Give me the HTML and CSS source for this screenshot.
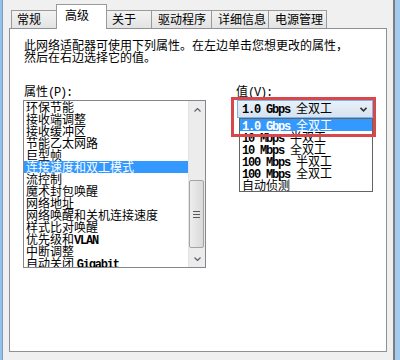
FILE: index.html
```html
<!DOCTYPE html>
<html lang="zh-CN">
<head>
<meta charset="utf-8">
<link rel="stylesheet" href="styles.css">
</head>
<body>
<div class="win">
  <div class="edge-l"></div>
  <div class="main">
    <div class="tabs">
      <div class="tab t1">常规</div>
      <div class="tab sel t2">高级</div>
      <div class="tab t3">关于</div>
      <div class="tab t4">驱动程序</div>
      <div class="tab t5">详细信息</div>
      <div class="tab t6">电源管理</div>
    </div>
    <div class="panel">
      <p class="desc">此网络适配器可使用下列属性。在左边单击您想更改的属性，<br>然后在右边选择它的值。</p>
      <div class="cols">
        <div class="col-left">
          <div class="label">属性<span class="m">(P):</span></div>
          <div class="listbox">
            <ul class="items">
              <li>环保节能</li>
              <li>接收端调整</li>
              <li>接收缓冲区</li>
              <li>节能乙太网路</li>
              <li>巨型帧</li>
              <li class="on">连接速度和双工模式</li>
              <li>流控制</li>
              <li>魔术封包唤醒</li>
              <li>网络地址</li>
              <li>网络唤醒和关机连接速度</li>
              <li>样式比对唤醒</li>
              <li>优先级和<span class="m b">VLAN</span></li>
              <li>中断调整</li>
              <li>自动关闭 <span class="m b">Gigabit</span></li>
            </ul>
            <div class="vscroll">
              <div class="sbtn"><svg width="7" height="4" viewBox="0 0 7 4"><polyline points="0.5,3.5 3.5,0.5 6.5,3.5" fill="none" stroke="#606060" stroke-width="1.2"/></svg></div>
              <div class="track-top"></div>
              <div class="thumb"><span></span><span></span><span></span></div>
              <div class="track-bot"></div>
              <div class="sbtn"><svg width="7" height="4" viewBox="0 0 7 4"><polyline points="0.5,0.5 3.5,3.5 6.5,0.5" fill="none" stroke="#606060" stroke-width="1.2"/></svg></div>
            </div>
          </div>
        </div>
        <div class="col-right">
          <div class="label">值<span class="m">(V):</span></div>
          <div class="combo-wrap">
            <div class="combo">
              <span class="val"><span class="m b">1.0 Gbps </span>全双工</span>
              <svg class="chev" width="7" height="5" viewBox="0 0 7 5"><polyline points="0.5,0.8 3.5,3.8 6.5,0.8" fill="none" stroke="#333" stroke-width="1.6"/></svg>
            </div>
            <ul class="dropdown">
              <li class="on"><span class="m b">1.0 Gbps </span>全双工</li>
              <li><span class="m b">10 Mbps </span>半双工</li>
              <li><span class="m b">10 Mbps </span>全双工</li>
              <li><span class="m b">100 Mbps </span>半双工</li>
              <li><span class="m b">100 Mbps </span>全双工</li>
              <li>自动侦测</li>
            </ul>
            <div class="highlight"></div>
          </div>
        </div>
      </div>
    </div>
  </div>
  <div class="edge-r"></div>
</div>
</body>
</html>
```

FILE: styles.css
```css
* { box-sizing: border-box; }
html, body { margin: 0; padding: 0; }
body {
  width: 400px;
  height: 360px;
  overflow: hidden;
  background: #f0f0f0;
  font-family: "Noto Sans CJK SC", sans-serif;
  font-size: 12px;
  color: #000;
}
.win { display: flex; height: 360px; }
.edge-l { width: 3px; background: #93c2ec; border-right: 1px solid #7d9cb8; }
.edge-r { width: 7px; border-left: 2px solid #7c7c7c; background: #a3cbf0; }
.main {
  flex: 1;
  display: flex;
  flex-direction: column;
  padding: 4px 6px 8px 6px;
}
.tabs {
  display: flex;
  align-items: flex-end;
  height: 24px;
  margin-left: 2px;
  position: relative;
  z-index: 2;
}
.tab {
  height: 18px;
  border: 1px solid #9a9a9a;
  border-bottom: none;
  background: linear-gradient(#f2f2f2, #e3e3e3);
  line-height: 16px;
  padding-left: 5px;
  margin-left: -1px;
  white-space: nowrap;
}
.tab.t1 { margin-left: 0; width: 46px; }
.tab.t2 { width: 51px; }
.tab.t3 { width: 46px; }
.tab.t4 { width: 61px; padding-left: 6px; }
.tab.t5 { width: 58px; padding-left: 6px; }
.tab.t6 { width: 59px; padding-left: 6px; }
.tab.sel {
  height: 25px;
  margin-bottom: -1px;
  background: #fff;
  padding-left: 8px;
  line-height: 19px;
  position: relative;
  z-index: 3;
}
.panel {
  flex: 1;
  background: #fff;
  border: 1px solid #8e9196;
  padding: 10px 0 0 13px;
}
.desc {
  margin: 0 0 0 1px;
  line-height: 12px;
  white-space: nowrap;
}
.cols { display: flex; gap: 29px; margin-top: 21px; }
.col-left { width: 183px; }
.col-right { width: 138px; }
.label { height: 16px; line-height: 13px; padding-left: 1px; }
.m { font-family: "Liberation Mono", monospace; font-size: 12px; letter-spacing: -1.2px; }
.b { font-weight: bold; }
.listbox {
  display: flex;
  height: 168px;
  border: 1px solid #828790;
}
.items {
  flex: 1;
  list-style: none;
  margin: 0;
  padding: 0;
  overflow: hidden;
}
.items li, .dropdown li {
  height: 12px;
  line-height: 12px;
  padding-left: 2px;
  white-space: nowrap;
}
.items li.on, .dropdown li.on { background: #3399ff; color: #fff; }
.vscroll {
  width: 17px;
  display: flex;
  flex-direction: column;
  background: #ececec;
  border-left: 1px solid #e4e4e4;
}
.sbtn {
  height: 17px;
  display: flex;
  align-items: center;
  justify-content: center;
}
.track-top { height: 62px; }
.track-bot { flex: 1; }
.thumb {
  height: 68px;
  margin: 0 1px 0 0;
  border: 1px solid #a3a3a3;
  border-radius: 2px;
  background: linear-gradient(90deg, #ededed, #dadada);
  display: flex;
  flex-direction: column;
  align-items: center;
  justify-content: center;
  gap: 2px;
}
.thumb span { display: block; width: 7px; height: 1px; background: #5a5a5a; }
.combo-wrap { position: relative; }
.combo {
  margin-left: 2px;
  height: 18px;
  border: 1px solid #7eb4ea;
  background: linear-gradient(#e9f1f9, #d6e3f0);
  display: flex;
  align-items: center;
  justify-content: space-between;
  padding: 0 5px 0 4px;
  line-height: 14px;
  white-space: nowrap;
}
.chev { display: block; }
.dropdown {
  list-style: none;
  margin: 0 0 0 4px;
  padding: 0;
  height: 74px;
  border: 1px solid #646464;
  background: #fff;
}
.highlight {
  position: absolute;
  left: -4px;
  top: -3px;
  width: 145px;
  height: 40px;
  border: 3px solid #d8474c;
  pointer-events: none;
}
```
